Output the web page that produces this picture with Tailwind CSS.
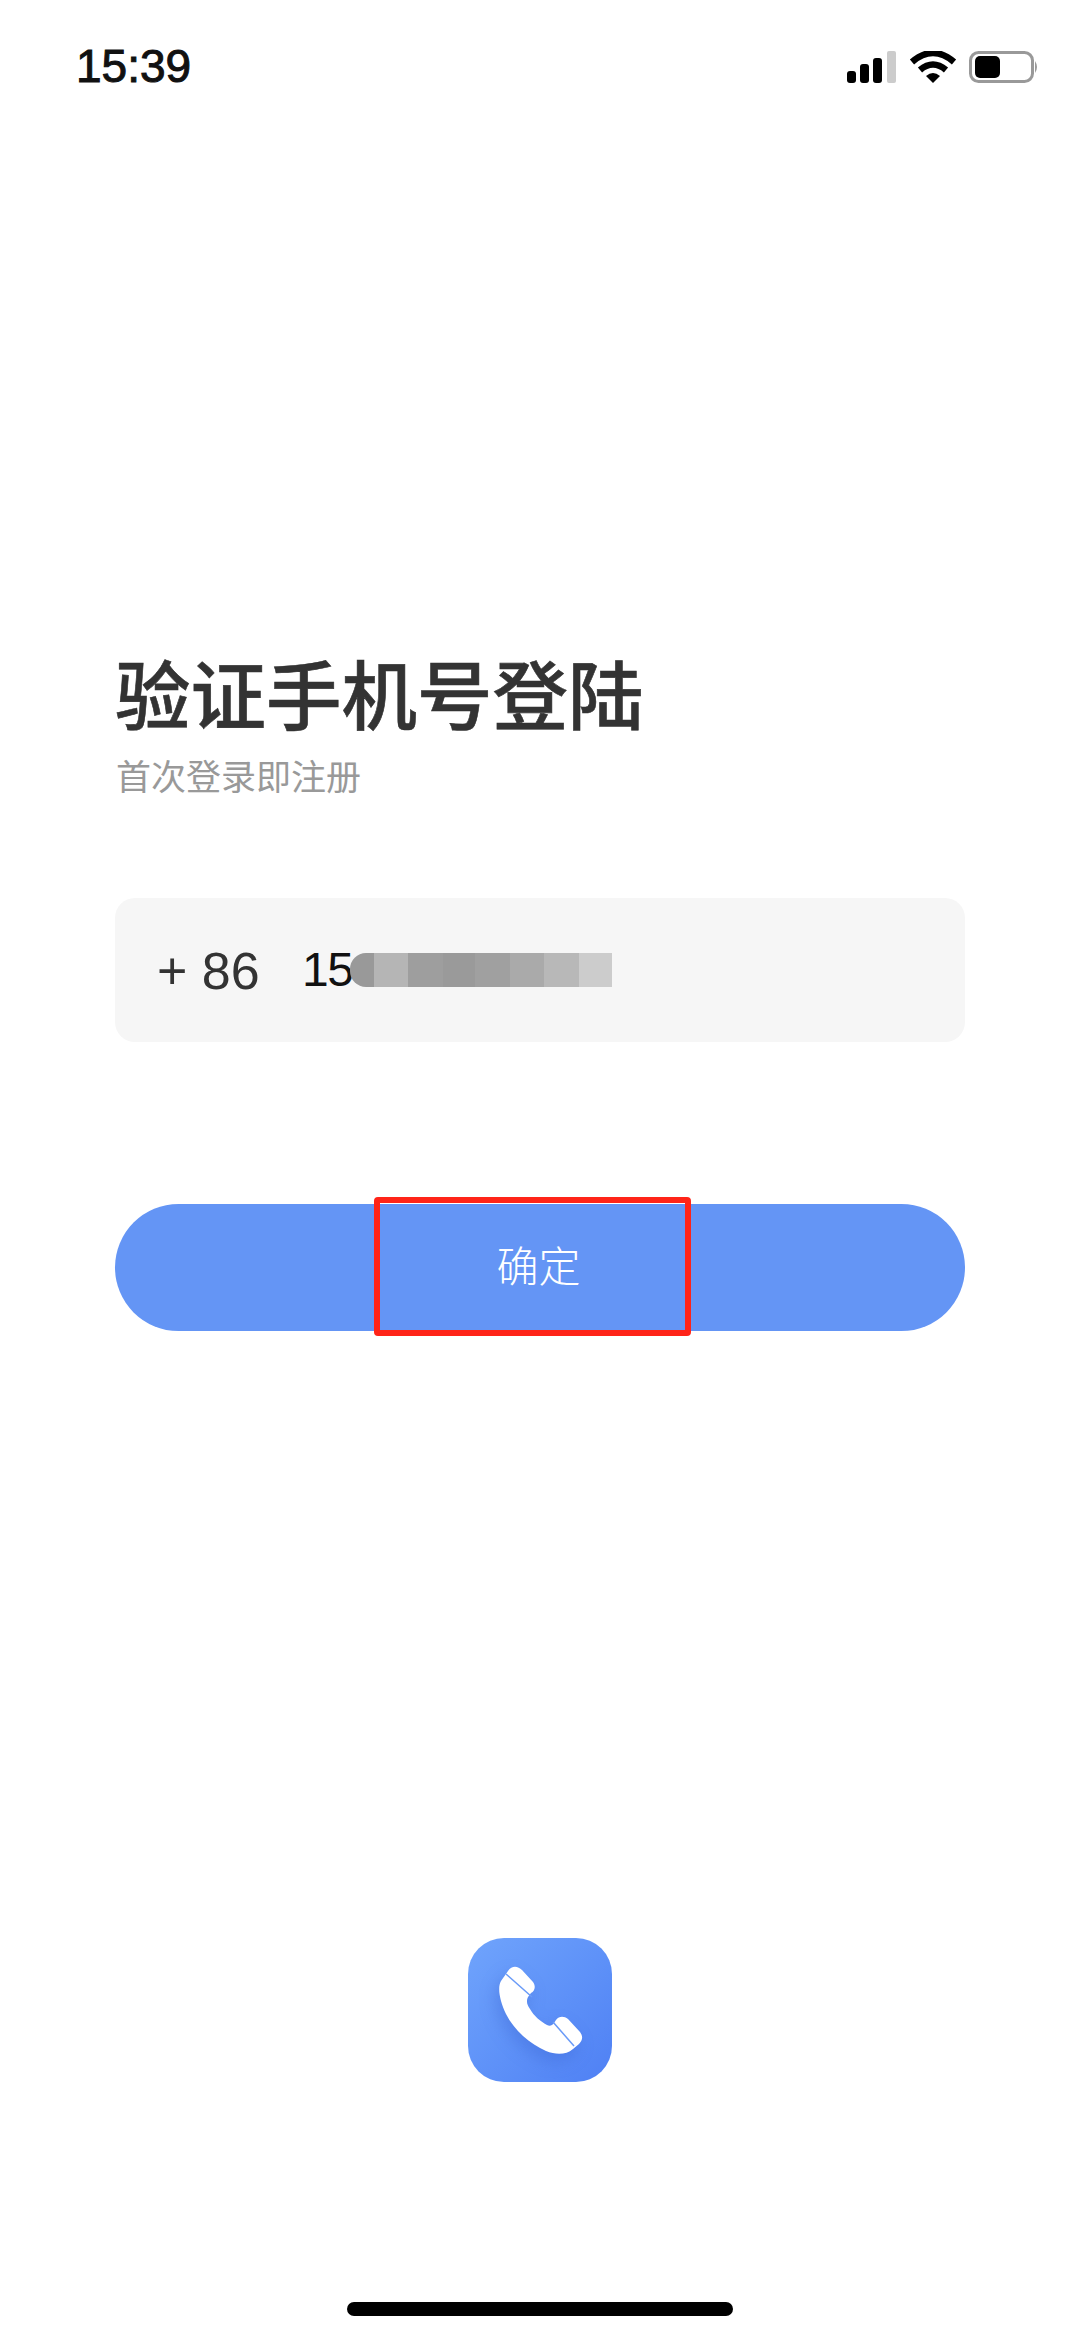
<!DOCTYPE html>
<html lang="zh-CN">
<head>
  <meta charset="UTF-8">
  <meta name="viewport" content="width=device-width, initial-scale=1.0">
  <title>验证手机号登陆</title>
  <script src="https://cdn.jsdelivr.net/npm/@tailwindcss/browser@4"></script>
</head>
<body class="bg-white font-['Liberation_Sans','Noto_Sans_CJK_SC',sans-serif]">
  <div class="relative w-[1080px] h-[2339px] overflow-hidden bg-white flex flex-col">
    <!-- Status bar -->
    <div class="h-[130px] pl-[76px] pr-[41px] pt-[41px] flex justify-between items-start">
      <span class="text-[46px] leading-[50px] text-[#111] [-webkit-text-stroke:1px_#111]">15:39</span>
      <svg class="mt-[10px]" width="194" height="32" viewBox="0 0 194 32">
        <rect x="2" y="20" width="9" height="12" rx="3" fill="#000"/>
        <rect x="15" y="13" width="9" height="19" rx="3" fill="#000"/>
        <rect x="28" y="7" width="9" height="25" rx="3" fill="#000"/>
        <rect x="42" y="0" width="9" height="32" rx="2" fill="#ccc"/>
        <path d="M67 11 Q88 -7 109 11" fill="none" stroke="#000" stroke-width="6.5"/>
        <path d="M75 19 Q88 8 101 19" fill="none" stroke="#000" stroke-width="6.5"/>
        <path d="M81 25 Q88 19 95 25 L88 32 Z" fill="#000"/>
        <rect x="125.5" y="1.5" width="62" height="29" rx="8" fill="none" stroke="#999" stroke-width="3"/>
        <rect x="130" y="5" width="25" height="22" rx="5" fill="#000"/>
        <path d="M190 10 Q194 16 190 22 Z" fill="#999"/>
      </svg>
    </div>

    <!-- Form -->
    <div class="pl-[115px] pr-[115px] pt-[523px]">
      <h1 class="text-[75.5px] leading-[90px] font-medium text-[#333] [-webkit-text-stroke:0.6px_#333]">验证手机号登陆</h1>
      <p class="mt-[13px] text-[35px] leading-[44px] text-[#999] ml-[1px]">首次登录即注册</p>

      <div class="mt-[98px] h-[144px] rounded-[20px] bg-[#f6f6f6] pl-[42px] flex items-center">
        <span class="w-[145px] text-[52px] leading-none text-[#333] mt-[2px]">+ 86</span>
        <span class="text-[48px] leading-none tracking-[-1.5px] text-[#111]">15</span>
        <div class="flex h-[34px] -ml-[2px]">
          <div class="w-[24px] bg-[#999] rounded-l-[16px]"></div>
          <div class="w-[34px] bg-[#b5b5b5]"></div>
          <div class="w-[35px] bg-[#9e9e9e]"></div>
          <div class="w-[32px] bg-[#9a9a9a]"></div>
          <div class="w-[35px] bg-[#a0a0a0]"></div>
          <div class="w-[34px] bg-[#aaa]"></div>
          <div class="w-[35px] bg-[#b8b8b8]"></div>
          <div class="w-[33px] bg-[#ccc]"></div>
        </div>
      </div>

      <button class="relative mt-[162px] w-full h-[127px] rounded-full bg-[#6495f5] flex items-center justify-center text-[42px] font-light text-white">
        <span class="-ml-[3px]">确定</span>
        <!-- red annotation box -->
        <span class="absolute left-[259px] top-[-7px] w-[317px] h-[139px] border-[6px] border-[#ff2418] rounded-[4px]"></span>
      </button>
    </div>

    <!-- App icon -->
    <div class="absolute left-[468px] top-[1938px] w-[144px] h-[144px] rounded-[36px] bg-gradient-to-br from-[#70a4fc] to-[#4f80f4] overflow-hidden">
      <svg class="drop-shadow-[-4px_8px_8px_rgba(50,90,200,0.3)]" width="144" height="144" viewBox="0 0 144 144">
        <path d="M40 33 C44 27 50 28 54 32 L65 44 C68 48 67 53 63 55 L60 59 C58 63 59 67 62 71 C66 78 72 83 79 87 C82 88.5 84 87.5 86 85 L88 82 C91 78 96 78 100 81 L112 94 C115 98 115 102 111 106 L105 111 C98 117 88 117 78 113 C62 106 46 92 38 76 C32 63 29 50 33 43 Z" fill="#fff"/>
        <path d="M38 36 L64 59 M85 84 L106 108" fill="none" stroke="#6a9bf8" stroke-width="1.5"/>
      </svg>
    </div>

    <!-- Home indicator -->
    <div class="absolute left-[347px] top-[2302px] w-[386px] h-[14px] rounded-full bg-black"></div>
  </div>
</body>
</html>
